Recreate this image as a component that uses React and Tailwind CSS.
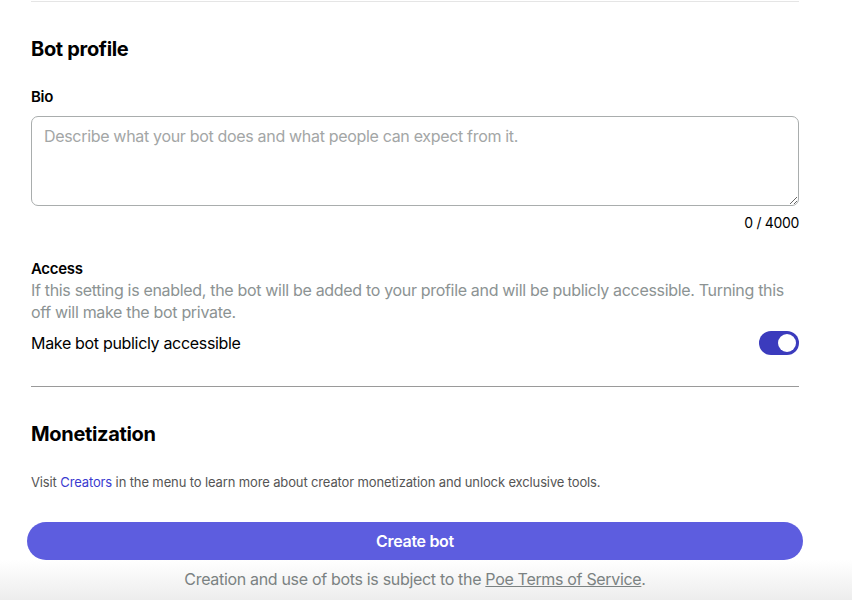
export default function App() {
  return (
    <div className="relative h-[600px] w-[852px] overflow-hidden bg-white text-black tracking-[-0.02em]" style={{ fontFamily: "Inter, 'Noto Sans', sans-serif" }}>
      <div className="ml-[31px] w-[768px]">
        <div className="mt-px h-px bg-[#e5e5e5]" />

        <h2 className="mt-[34px] text-[20px] font-bold leading-[26px]">Bot profile</h2>

        <label className="mt-[25px] block text-[15px] font-semibold leading-[20px]">Bio</label>
        <textarea
          className="mt-[9px] block h-[90px] w-full resize-y rounded-[7px] border border-[#a9adad] px-3 py-[8px] text-[16px] leading-[22px] placeholder:text-[#a3a6a6] focus:outline-none"
          placeholder="Describe what your bot does and what people can expect from it."
        />
        <div className="mt-[8px] text-right text-[14px] leading-[18px]">0 / 4000</div>

        <div className="mt-[27px] text-[15px] font-semibold leading-[20px]">Access</div>
        <p className="text-[16px] leading-[22px] text-[#8c9393]">
          If this setting is enabled, the bot will be added to your profile and will be publicly accessible. Turning this off will make the bot private.
        </p>
        <div className="mt-[8px] flex items-center justify-between">
          <span className="text-[16px] leading-[22px]">Make bot publicly accessible</span>
          <button className="flex h-[24px] w-[40px] items-center justify-end rounded-full bg-[#3b3bbd] px-[3px]">
            <span className="h-[18px] w-[18px] rounded-full bg-white" />
          </button>
        </div>

        <div className="mt-[31px] h-px bg-[#9a9a9a]" />

        <h2 className="mt-[34px] text-[20px] font-bold leading-[26px]">Monetization</h2>

        <p className="mt-[26px] text-[13px] leading-[18px] tracking-[-0.01em] text-[#555]">
          Visit <span className="text-[#3b3bd0]">Creators</span> in the menu to learn more about creator monetization and unlock exclusive tools.
        </p>
      </div>

      <div className="absolute left-[27px] top-[522px] w-[776px]">
        <button className="h-[38px] w-full rounded-full bg-[#5d5ddf] text-[16px] font-semibold text-white">Create bot</button>
      </div>
      <div className="absolute bottom-0 left-0 right-0 top-[560px] bg-gradient-to-b from-white to-[#ededed]">
        <p className="ml-[31px] mt-[8px] w-[768px] text-center text-[16px] leading-[22px] text-[#7b8282]">
          Creation and use of bots is subject to the <span className="underline">Poe Terms of Service</span>.
        </p>
      </div>
    </div>
  );
}
